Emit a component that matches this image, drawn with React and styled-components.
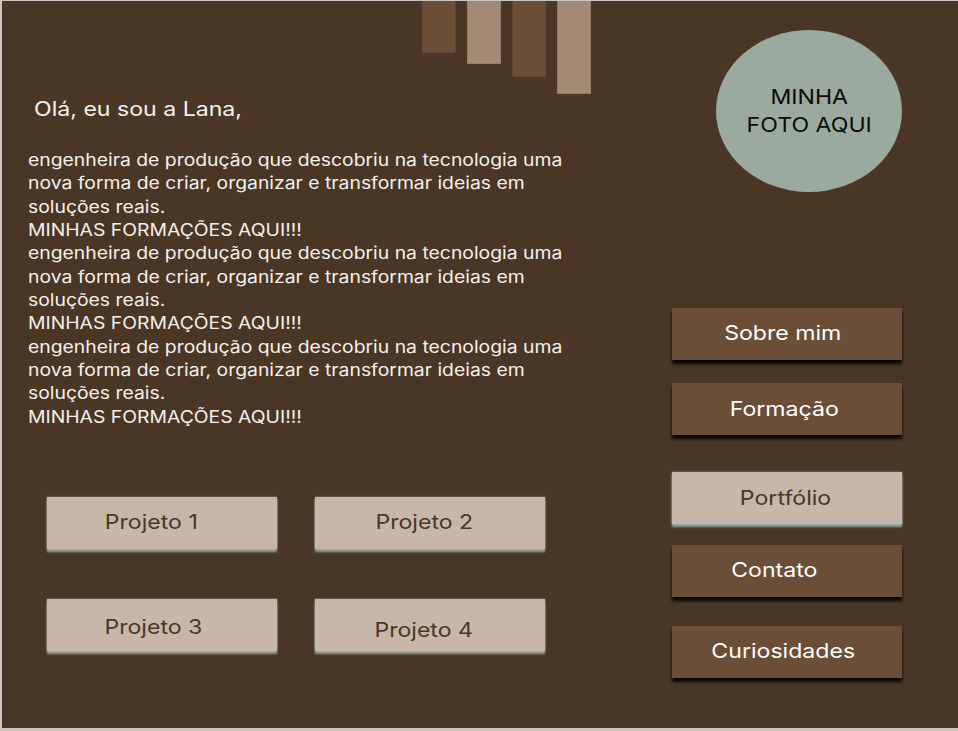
import React from "react";
import styled, { createGlobalStyle, css } from "styled-components";

const Global = createGlobalStyle`
  html, body { margin: 0; padding: 0; background: #cdc6c0; }
  body { font-family: Inter, "Noto Sans", sans-serif; overflow: hidden; }
  * { box-sizing: border-box; }
`;

/* the design is drawn slightly wide: text glyphs are stretched horizontally */
const wide = css`
  transform: scaleX(1.155);
`;

const Panel = styled.main`
  margin: 1px 0 0 2px;
  width: 956px;
  height: 727px;
  background: #4a3625;
  display: grid;
  grid-template-columns: 1fr 230px;
  padding-right: 56px;
  color: #f6f1ec;
`;

const LeftCol = styled.section`
  display: flex;
  flex-direction: column;
  padding-left: 26px;
`;

const Bars = styled.div`
  display: flex;
  align-items: flex-start;
  gap: 11px;
  margin-left: 394px;
  height: 93px;
`;

const Bar = styled.div`
  width: 34px;
  height: ${(p) => p.$h}px;
  background: ${(p) => (p.$light ? "#a38a74" : "#6b4e38")};
  border: 1px solid ${(p) => (p.$light ? "#947b66" : "#5e4431")};
  border-top: none;
`;

const Greeting = styled.h1`
  margin: 3px 0 0 6px;
  font-size: 20px;
  line-height: 24px;
  font-weight: 400;
  transform-origin: left top;
  ${wide};
`;

const Paragraph = styled.p`
  margin: 28px 0 0 0;
  font-size: 16.75px;
  line-height: 23.33px;
  width: 484px;
  transform-origin: left top;
  ${wide};
`;

const ProjectGrid = styled.div`
  margin: 68px 0 0 19px;
  display: grid;
  grid-template-columns: 230px 230px;
  column-gap: 38px;
  row-gap: 50px;
`;

const ProjectButton = styled.button`
  height: 52px;
  border: none;
  background: #c7b7a8;
  color: #4a3625;
  font-family: inherit;
  font-size: 20px;
  display: flex;
  align-items: center;
  justify-content: center;
  padding: 0 ${(p) => -p.$shift * 2}px 0 0;
  box-shadow: 0 0 2px rgba(199, 183, 168, 0.7), 0 3px 2px #8fa59a;
`;

const Label = styled.span`
  display: inline-block;
  position: relative;
  top: ${(p) => p.$dy || 0}px;
  ${wide};
`;

const RightCol = styled.aside`
  display: flex;
  flex-direction: column;
  align-items: stretch;
`;

const Photo = styled.div`
  align-self: flex-end;
  margin-top: 29px;
  width: 186px;
  height: 162px;
  border-radius: 50%;
  background: #9aaa9e;
  color: #0b0b0b;
  font-size: 20px;
  line-height: 28px;
  text-align: center;
  display: flex;
  align-items: center;
  justify-content: center;
`;

const NavButton = styled.button`
  margin-top: ${(p) => p.$mt}px;
  height: 52px;
  border: none;
  font-family: inherit;
  font-size: 20px;
  display: flex;
  align-items: center;
  justify-content: center;
  background: ${(p) => (p.$light ? "#c7b7a8" : "#6b4e38")};
  color: ${(p) => (p.$light ? "#4a3625" : "#ffffff")};
  padding: 0 ${(p) => -(p.$shift || 0) * 2}px 0 0;
  box-shadow: ${(p) =>
    p.$light
      ? "0 0 2px rgba(199, 183, 168, 0.7), 0 3px 2px #8fa59a"
      : "0 4px 3px rgba(0, 0, 0, 0.9)"};
`;

const text =
  "engenheira de produção que descobriu na tecnologia uma nova forma de criar, organizar e transformar ideias em soluções reais.";

const projects = [
  { name: "Projeto 1", shift: -11, dy: -1 },
  { name: "Projeto 2", shift: -6, dy: -1 },
  { name: "Projeto 3", shift: -9, dy: 2 },
  { name: "Projeto 4", shift: -6, dy: 5 },
];

const nav = [
  { name: "Sobre mim", mt: 116, shift: -4, dy: -1 },
  { name: "Formação", mt: 23, shift: -3 },
  { name: "Portfólio", mt: 37, shift: -1, light: true },
  { name: "Contato", mt: 21, shift: -13, dy: -1 },
  { name: "Curiosidades", mt: 29, shift: -4, dy: -1 },
];

export default function App() {
  return (
    <>
      <Global />
      <Panel>
        <LeftCol>
          <Bars>
            <Bar $h={52} />
            <Bar $h={63} $light />
            <Bar $h={76} />
            <Bar $h={93} $light />
          </Bars>
          <Greeting>Olá, eu sou a Lana,</Greeting>
          <Paragraph>
            {text}
            <br />
            MINHAS FORMAÇÕES AQUI!!!
            <br />
            {text}
            <br />
            MINHAS FORMAÇÕES AQUI!!!
            <br />
            {text}
            <br />
            MINHAS FORMAÇÕES AQUI!!!
          </Paragraph>
          <ProjectGrid>
            {projects.map((p) => (
              <ProjectButton key={p.name} $shift={p.shift}>
                <Label $dy={p.dy}>{p.name}</Label>
              </ProjectButton>
            ))}
          </ProjectGrid>
        </LeftCol>
        <RightCol>
          <Photo>
            <Label>
              MINHA
              <br />
              FOTO AQUI
            </Label>
          </Photo>
          {nav.map((n) => (
            <NavButton key={n.name} $mt={n.mt} $shift={n.shift} $light={n.light}>
              <Label $dy={n.dy}>{n.name}</Label>
            </NavButton>
          ))}
        </RightCol>
      </Panel>
    </>
  );
}
